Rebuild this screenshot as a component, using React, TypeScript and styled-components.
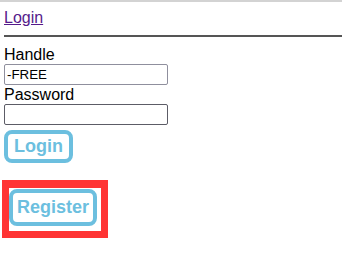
import React from "react";
import styled, { createGlobalStyle } from "styled-components";

const GlobalStyle = createGlobalStyle`
  body {
    margin: 0;
    background: #fff;
    font-family: "Liberation Sans", Arial, sans-serif;
  }
`;

const Page = styled.div`
  border-top: 2px solid #d3d3d3;
  padding: 7px 0 0 4px;
  width: 342px;
  box-sizing: border-box;
`;

const Nav = styled.nav`
  font-size: 16px;
  line-height: 18px;
`;

const NavLink = styled.a`
  color: #551a8b;
  text-decoration: underline;
`;

const Rule = styled.hr`
  border: 0;
  border-top: 2px solid #555;
  margin: 8px 0 8px;
`;

const Form = styled.form`
  display: flex;
  flex-direction: column;
  align-items: flex-start;
`;

const Label = styled.label`
  font-size: 16px;
  line-height: 19px;
  color: #000;
`;

const Input = styled.input<{ $dark?: boolean }>`
  width: 164px;
  height: 21px;
  box-sizing: border-box;
  border: 1px solid ${(p) => (p.$dark ? "#5c5c66" : "#8f8f9d")};
  border-radius: 2px;
  padding: 1px 2px;
  font-family: "Liberation Sans", Arial, sans-serif;
  font-size: 13.33px;
  color: #000;
  margin: 0;
`;

const Button = styled.button<{ $padY: number; $padX: number }>`
  border: 4px solid #6cbfdf;
  border-radius: 8px;
  background: #fff;
  color: #6cbfdf;
  font-family: "Liberation Sans", Arial, sans-serif;
  font-weight: bold;
  font-size: 18px;
  line-height: 21px;
  padding: ${(p) => `${p.$padY}px ${p.$padX}px`};
  margin: 0;
  cursor: pointer;
`;

const LoginRow = styled.div`
  margin-top: 5px;
`;

const Highlight = styled.div`
  display: inline-block;
  margin: 17px 0 0 -2px;
  border: 7px solid #ff3434;
  border-top-width: 8px;
  padding: 1px 4px 5px 0;
`;

export default function App() {
  return (
    <>
      <GlobalStyle />
      <Page>
        <Nav>
          <NavLink href="#">Login</NavLink>
        </Nav>
        <Rule />
        <Form onSubmit={(e) => e.preventDefault()}>
          <Label htmlFor="handle">Handle</Label>
          <Input id="handle" defaultValue="-FREE" />
          <Label htmlFor="password">Password</Label>
          <Input id="password" type="password" $dark />
          <LoginRow>
            <Button type="submit" $padY={2} $padX={6}>
              Login
            </Button>
          </LoginRow>
        </Form>
        <Highlight>
          <Button type="button" $padY={4} $padX={4}>
            Register
          </Button>
        </Highlight>
      </Page>
    </>
  );
}
